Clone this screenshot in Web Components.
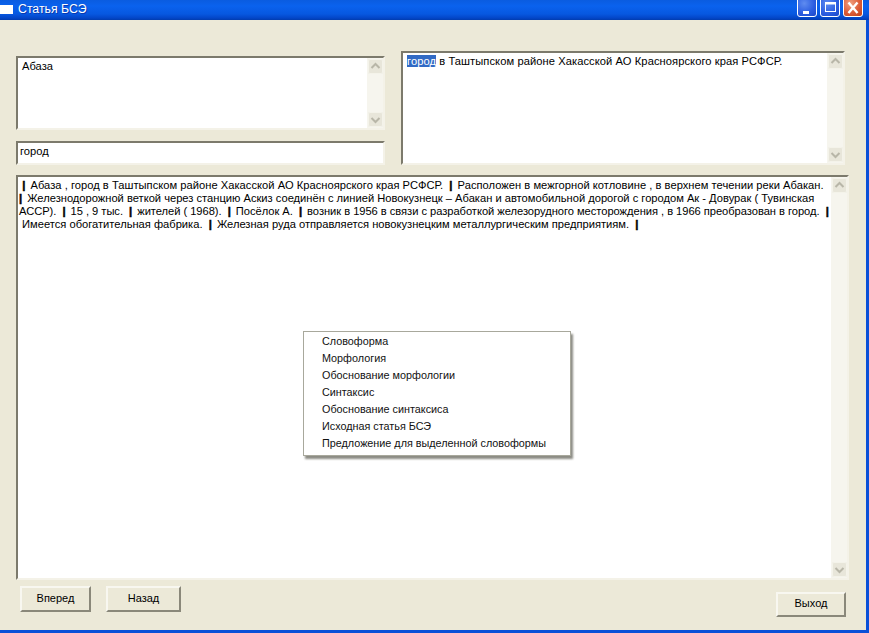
<!DOCTYPE html>
<html lang="ru">
<head>
<meta charset="utf-8">
<title>Статья БСЭ</title>
<style>
  html, body { margin: 0; padding: 0; height: 633px; overflow: hidden; background: #ece9d8; }
  body { font: 11px/13px "Liberation Sans", Arial, sans-serif; color: #000; }
  b { font-weight: bold; color: #000; -webkit-text-stroke: .5px #000; margin-right: 2px; }
  .sel { background: #316ac5; color: #fff; }
  .line { display: block; white-space: nowrap; }
  .wide { letter-spacing: .03px; }
  .narrow { letter-spacing: -.034px; }
</style>
</head>
<body>
<xp-window>
  <span slot="title">Статья БСЭ</span>

  <div slot="top-left">
    <xp-memo style="height:74px" pad="2px 4px" scroll>Абаза</xp-memo>
    <xp-memo style="height:24px;margin-top:11px" pad="2px 2px">город</xp-memo>
  </div>
  <xp-memo slot="top-right" style="height:114px;letter-spacing:.08px" pad="2px 4px" scroll><span class="sel">город</span> в Таштыпском районе Хакасской АО Красноярского края РСФСР.</xp-memo>

  <xp-memo slot="main" style="height:405px" pad="2px 1px" scroll>
    <span class="line wide">&nbsp;<b>|</b> Абаза , город в Таштыпском районе Хакасской АО Красноярского края РСФСР. &nbsp;<b>|</b> Расположен в межгорной котловине , в верхнем течении реки Абакан.</span>
    <span class="line"><b>|</b> Железнодорожной веткой через станцию Аскиз соединён с линией Новокузнецк – Абакан и автомобильной дорогой с городом Ак - Довурак ( Тувинская</span>
    <span class="line narrow">АССР). &nbsp;<b>|</b> 15 , 9 тыс. &nbsp;<b>|</b> жителей ( 1968). &nbsp;<b>|</b> Посёлок А. &nbsp;<b>|</b> возник в 1956 в связи с разработкой железорудного месторождения , в 1966 преобразован в город. &nbsp;<b>|</b></span>
    <span class="line">&nbsp;Имеется обогатительная фабрика. &nbsp;<b>|</b> Железная руда отправляется новокузнецким металлургическим предприятиям. &nbsp;<b>|</b></span>
  </xp-memo>

  <xp-menu slot="overlay">
    <xp-menu-item>Словоформа</xp-menu-item>
    <xp-menu-item>Морфология</xp-menu-item>
    <xp-menu-item>Обоснование морфологии</xp-menu-item>
    <xp-menu-item>Синтаксис</xp-menu-item>
    <xp-menu-item>Обоснование синтаксиса</xp-menu-item>
    <xp-menu-item>Исходная статья БСЭ</xp-menu-item>
    <xp-menu-item>Предложение для выделенной словоформы</xp-menu-item>
  </xp-menu>

  <xp-button slot="left-buttons" style="width:71px;height:26px">Вперед</xp-button>
  <xp-button slot="left-buttons" style="width:75px;height:26px">Назад</xp-button>
  <xp-button slot="right-buttons" style="width:70px;height:25px">Выход</xp-button>
</xp-window>

<script>
// ventana estilo XP: barra de titulo y zona cliente con slots
class XpWindow extends HTMLElement {
  constructor () {
    super();
    this.attachShadow( { mode: 'open' } );
    this.shadowRoot.innerHTML = `
      <style>
        :host { display: flex; flex-direction: column; width: 869px; height: 633px; box-sizing: border-box; background: #ece9d8; border-right: 3px solid #0a50d8; border-bottom: 3px solid #0a50d8; }
        .bar { flex: none; height: 20px; margin-right: -3px; display: flex; align-items: center; overflow: hidden; color: #fff; font: 12.3px/14px "Liberation Sans", Arial, sans-serif;
          background: linear-gradient(#0a5ce0 0, #0a62ee 30%, #0758e0 70%, #0346c8 90%, #023cae 100%); }
        .icon { flex: none; width: 13px; height: 9px; margin: 0 5px 2px 0; background: #fff; }
        .title { flex: 1; margin-bottom: 2px; text-shadow: 1px 1px 0 #0a3ab0; }
        .caps { flex: none; align-self: flex-start; display: flex; gap: 3px; margin: -3px 6px 0 0; }
        .client { flex: 1; position: relative; display: flex; flex-direction: column; padding: 31px 0 0 16px; }
        .top { display: flex; gap: 16px; }
        .tl { width: 369px; padding-top: 5px; }
        .tr { width: 444px; }
        .main { width: 833px; margin-top: 10px; }
        .foot { flex: 1; display: flex; justify-content: space-between; width: 830px; box-sizing: border-box; padding-left: 4px; }
        .left { display: flex; gap: 15px; padding-top: 6px; }
        .right { padding-top: 12px; }
        ::slotted([slot=overlay]) { position: absolute; left: 303px; top: 311px; }
      </style>
      <div class="bar">
        <div class="icon"></div>
        <div class="title"><slot name="title"></slot></div>
        <div class="caps">
          <xp-caption kind="min"></xp-caption>
          <xp-caption kind="max"></xp-caption>
          <xp-caption kind="close"></xp-caption>
        </div>
      </div>
      <div class="client">
        <div class="top">
          <div class="tl"><slot name="top-left"></slot></div>
          <div class="tr"><slot name="top-right"></slot></div>
        </div>
        <div class="main"><slot name="main"></slot></div>
        <div class="foot">
          <div class="left"><slot name="left-buttons"></slot></div>
          <div class="right"><slot name="right-buttons"></slot></div>
        </div>
        <slot name="overlay"></slot>
      </div>`;
  }
}

class XpCaption extends HTMLElement {
  constructor () {
    super();
    this.attachShadow( { mode: 'open' } );
  }

  connectedCallback () {
    const kind = this.getAttribute( 'kind' );
    const glyphs = {
      min: '<rect x="5" y="13" width="6" height="3" fill="#fff"/>',
      max: '<rect x="4.5" y="4.5" width="10" height="9" fill="none" stroke="#fff"/><rect x="4" y="4" width="11" height="2.5" fill="#fff"/>',
      close: '<path d="M4.5 4.5 L13.5 15 M13.5 4.5 L4.5 15" stroke="#fff" stroke-width="2.4" fill="none"/>'
    };
    const bg = kind === 'close'
      ? 'radial-gradient(circle at 35% 30%, #f0a080, #dc5c38 55%, #c04018)'
      : 'radial-gradient(circle at 35% 30%, #5f8cf0, #2a5ce0 60%, #1c48c8)';
    this.shadowRoot.innerHTML = `
      <style>
        :host { display: block; width: 20px; height: 20px; box-sizing: border-box; border: 1px solid #fff; border-radius: 3px; background: ${ bg }; }
        svg { display: block; }
      </style>
      <svg width="18" height="18" viewBox="0 0 18 18">${ glyphs[ kind ] }</svg>`;
  }
}

// caja de texto hundida, con barra de scroll opcional
class XpMemo extends HTMLElement {
  constructor () {
    super();
    this.attachShadow( { mode: 'open' } );
  }

  connectedCallback () {
    const pad = this.getAttribute( 'pad' ) ?? '2px';
    const bar = this.hasAttribute( 'scroll' ) ? '<xp-scrollbar></xp-scrollbar>' : '';
    this.shadowRoot.innerHTML = `
      <style>
        :host { display: flex; box-sizing: border-box; background: #fff; border: 2px solid; border-color: #7c7a6c #f4f2e8 #f4f2e8 #7c7a6c; font: 11.15px/13px "Liberation Sans", Arial, sans-serif; }
        .text { flex: 1; min-width: 0; padding: ${ pad }; overflow: hidden; }
      </style>
      <div class="text"><slot></slot></div>${ bar }`;
  }
}

class XpScrollbar extends HTMLElement {
  constructor () {
    super();
    this.attachShadow( { mode: 'open' } );
    const chevron = ( d ) => `<svg width="15" height="15" viewBox="0 0 15 15"><path d="${ d }" fill="none" stroke="#b8b6a8" stroke-width="2"/></svg>`;
    this.shadowRoot.innerHTML = `
      <style>
        :host { flex: none; width: 16px; display: flex; flex-direction: column; justify-content: space-between; background: #f6f5ee; }
        .arrow { width: 15px; height: 15px; margin: 1px 0 1px 1px; background: #e8e6da; border-radius: 2px; box-shadow: inset 0 0 0 1px #f4f3ea; }
        svg { display: block; }
      </style>
      <div class="arrow">${ chevron( 'M3.5 9 L7.5 5 L11.5 9' ) }</div>
      <div class="arrow">${ chevron( 'M3.5 6 L7.5 10 L11.5 6' ) }</div>`;
  }
}

class XpButton extends HTMLElement {
  constructor () {
    super();
    this.attachShadow( { mode: 'open' } );
    this.shadowRoot.innerHTML = `
      <style>
        :host { display: flex; align-items: center; justify-content: center; box-sizing: border-box; padding-bottom: 2px; background: #ece9d8; border: 2px solid; border-color: #f8f7f0 #8a887a #8a887a #f8f7f0; font: 11px/13px "Liberation Sans", Arial, sans-serif; }
      </style>
      <slot></slot>`;
  }
}

class XpMenu extends HTMLElement {
  constructor () {
    super();
    this.attachShadow( { mode: 'open' } );
    this.shadowRoot.innerHTML = `
      <style>
        :host { display: block; width: 268px; height: 125px; box-sizing: border-box; padding: 1px 0; background: #fff; border: 1px solid #a8a89c; box-shadow: 2px 3px 2px #8c8c84; }
      </style>
      <slot></slot>`;
  }
}

class XpMenuItem extends HTMLElement {
  constructor () {
    super();
    this.attachShadow( { mode: 'open' } );
    this.shadowRoot.innerHTML = `
      <style>
        :host { display: block; height: 17px; padding-left: 18px; font: 10.8px/17px "Liberation Sans", Arial, sans-serif; color: #111; white-space: nowrap; }
      </style>
      <slot></slot>`;
  }
}

customElements.define( 'xp-window', XpWindow );
customElements.define( 'xp-caption', XpCaption );
customElements.define( 'xp-memo', XpMemo );
customElements.define( 'xp-scrollbar', XpScrollbar );
customElements.define( 'xp-button', XpButton );
customElements.define( 'xp-menu', XpMenu );
customElements.define( 'xp-menu-item', XpMenuItem );
</script>
</body>
</html>
